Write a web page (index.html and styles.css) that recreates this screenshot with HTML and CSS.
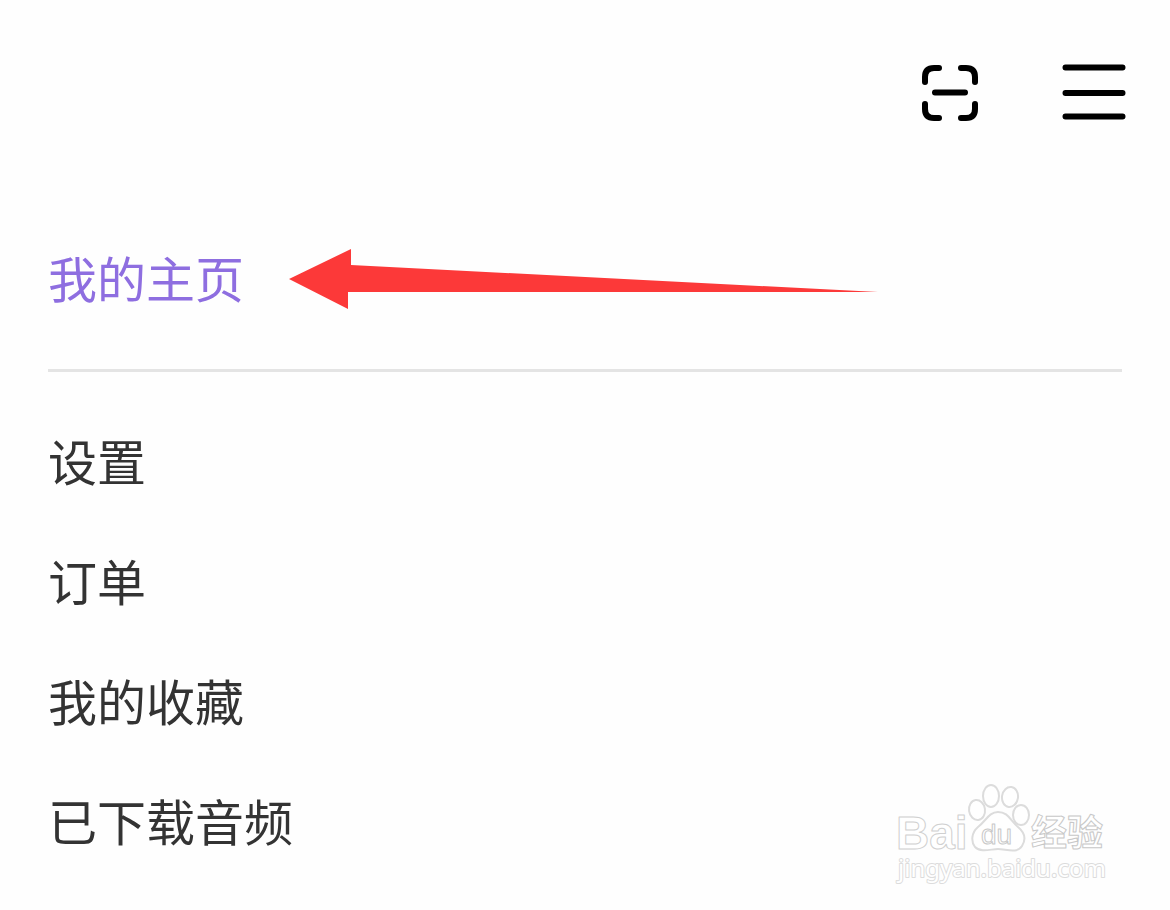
FILE: index.html
```html
<!DOCTYPE html>
<html lang="zh-CN">
<head>
<meta charset="utf-8">
<meta name="viewport" content="width=device-width, initial-scale=1">
<title>我的主页</title>
<link rel="stylesheet" href="styles.css">
</head>
<body>
<header class="toolbar">
  <button class="icon-button" type="button" aria-label="扫一扫">
    <svg class="icon" width="64" height="64" viewBox="0 0 64 64">
      <path d="M7 20V15Q7 6 16 6H21M43 6H48Q57 6 57 15V20M57 42V47Q57 56 48 56H43M21 56H16Q7 56 7 47V42M17 30.500H47"/>
    </svg>
  </button>
  <button class="icon-button" type="button" aria-label="菜单">
    <svg class="icon" width="64" height="64" viewBox="0 0 64 64">
      <path d="M3.500 5.500H60.500M3.500 31H60.500M3.500 54.500H60.500"/>
    </svg>
  </button>
</header>
<nav class="menu">
  <div class="home-row">
    <a class="item item-current" href="#home">我的主页</a>
    <svg class="arrow" width="589" height="60" viewBox="0 0 589 60" aria-hidden="true">
      <path d="M0 30L62 0V16L589 43H59V60Z"/>
    </svg>
  </div>
  <ul class="list">
    <li><a class="item" href="#settings">设置</a></li>
    <li><a class="item" href="#orders">订单</a></li>
    <li><a class="item" href="#favorites">我的收藏</a></li>
    <li><a class="item" href="#downloads">已下载音频</a></li>
  </ul>
</nav>
<svg class="watermark" width="240" height="130" viewBox="0 0 240 130">
  <g class="mark">
    <ellipse cx="97" cy="40" rx="8" ry="10" transform="rotate(-8 97 40)"/>
    <ellipse cx="111" cy="26" rx="8" ry="11"/>
    <ellipse cx="130" cy="27" rx="8" ry="10" transform="rotate(8 130 27)"/>
    <ellipse cx="141" cy="45" rx="8" ry="10"/>
    <path d="M118 42C109 42 106 51 98 57C91 63 91 72 95 77C101 83 111 79 118 79C126 79 137 84 142 76C147 68 144 62 138 57C130 50 128 42 118 42Z"/>
    <text class="latin" x="16" y="79">Bai</text>
    <text class="du" x="101" y="74">du</text>
    <text class="han" x="151" y="76">经验</text>
    <text class="site" x="18" y="107">jingyan.baidu.com</text>
  </g>
</svg>
</body>
</html>
```
FILE: styles.css
```css
* {
  box-sizing: border-box;
}

body {
  position: relative;
  min-height: 100vh;
  margin: 0;
  background: #fefefe;
  color: #333;
  font-family: "Noto Sans CJK SC", sans-serif;
}

.toolbar {
  display: flex;
  justify-content: flex-end;
  gap: 80px;
  padding: 62px 44px 91px;
}

.icon-button {
  display: block;
  padding: 0;
  border: 0;
  background: none;
  cursor: pointer;
}

.icon {
  display: block;
  fill: none;
  stroke: #000;
  stroke-width: 6;
  stroke-linecap: round;
}

.menu {
  padding: 0 48px;
}

.home-row {
  display: flex;
  align-items: center;
  gap: 45px;
  padding-bottom: 32px;
  border-bottom: 3px solid #e4e4e4;
}

.item {
  display: block;
  color: inherit;
  font-size: 49px;
  line-height: 120px;
  text-decoration: none;
}

.item-current {
  flex: none;
  color: #8e6ee0;
}

.arrow {
  flex: 0 1 auto;
  min-width: 0;
  margin-top: 4px;
  fill: #fc3939;
}

.list {
  margin: 0;
  padding: 28px 0 0;
  list-style: none;
}

.watermark {
  position: absolute;
  right: 50px;
  bottom: 10px;
  pointer-events: none;
}

.mark {
  fill: #fff;
  stroke: #dcdcdc;
  stroke-width: 2;
  stroke-linejoin: round;
}

.mark .latin {
  stroke-width: 1;
  stroke: #d0d0d0;
  font: bold 46px "Liberation Sans", sans-serif;
}

.mark .du {
  stroke-width: 1;
  stroke: #c8c8c8;
  font: 28px "Liberation Sans", sans-serif;
}

.mark .han {
  stroke-width: 1;
  stroke: #c8c8c8;
  font: bold 36px "Noto Sans CJK SC", sans-serif;
}

.mark .site {
  paint-order: stroke;
  font: 24px "Noto Sans", sans-serif;
}
```
